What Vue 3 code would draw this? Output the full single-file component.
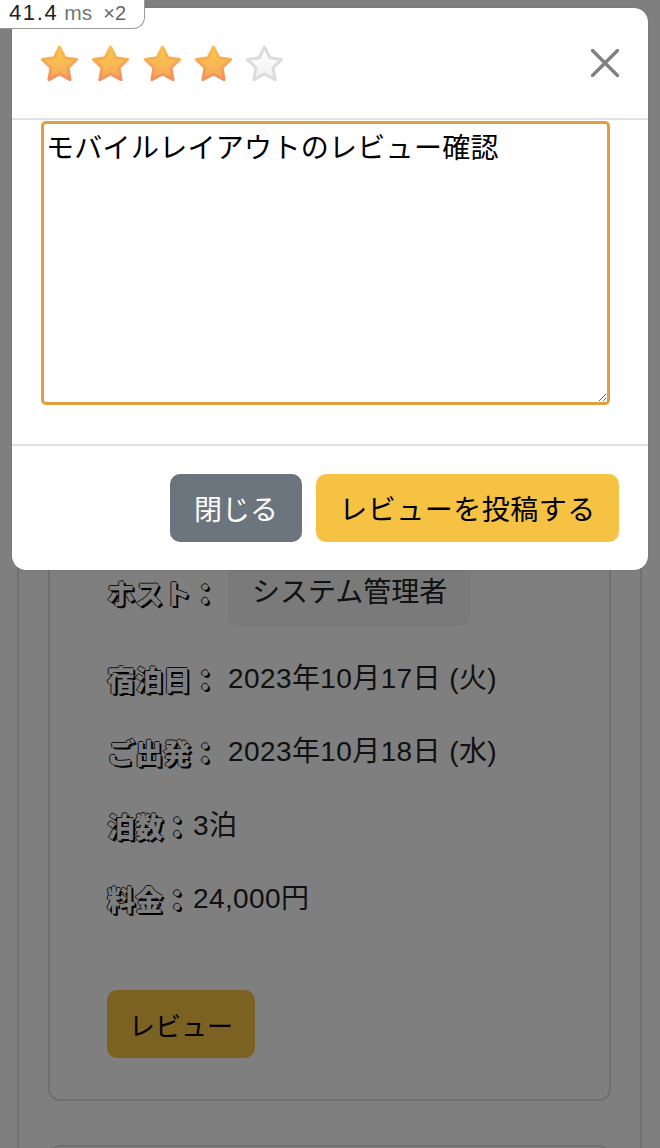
<script setup>
const stars = [true, true, true, true, false]
const reviewText = 'モバイルレイアウトのレビュー確認'
const details = [
  { label: 'ホスト：', value: 'システム管理者', wide: true, pill: true },
  { label: '宿泊日：', value: '2023年10月17日 (火)', wide: true },
  { label: 'ご出発：', value: '2023年10月18日 (水)', wide: true },
  { label: '泊数：', value: '3泊' },
  { label: '料金：', value: '24,000円' }
]
</script>

<template>
  <div class="page">
    <div class="outer">
      <section class="card">
        <div v-for="row in details" :key="row.label" class="row">
          <span class="label" :class="{ wide: row.wide }">{{ row.label }}</span>
          <span class="value" :class="{ pill: row.pill }">{{ row.value }}</span>
        </div>
        <button class="review" type="button">レビュー</button>
      </section>
      <section class="card next"></section>
    </div>

    <div class="backdrop"></div>

    <div class="modal">
      <header class="modal-head">
        <div class="stars">
          <svg v-for="(on, i) in stars" :key="i" class="star" viewBox="0 0 41 40">
            <defs>
              <linearGradient id="gold" x1="0" y1="0" x2="0" y2="1">
                <stop offset="0" stop-color="#fbcd48" />
                <stop offset="1" stop-color="#f6a65c" />
              </linearGradient>
              <linearGradient id="goldedge" x1="0" y1="0" x2="0" y2="1">
                <stop offset="0" stop-color="#f9bd4c" />
                <stop offset="1" stop-color="#f3905e" />
              </linearGradient>
              <linearGradient id="blank" x1="0" y1="0" x2="0" y2="1">
                <stop offset="0" stop-color="#ffffff" />
                <stop offset="1" stop-color="#f1f1f1" />
              </linearGradient>
            </defs>
            <path
              d="M20.5 3 L25.79 13.72 L37.62 15.44 L29.06 23.78 L31.08 35.56 L20.5 30 L9.92 35.56 L11.94 23.78 L3.38 15.44 L15.21 13.72 Z"
              :fill="on ? 'url(#gold)' : 'url(#blank)'"
              :stroke="on ? 'url(#goldedge)' : '#dcdcdc'"
              stroke-width="3"
              stroke-linejoin="round"
            />
          </svg>
        </div>
        <button class="close" type="button" aria-label="閉じる">
          <svg viewBox="0 0 28 28" width="28" height="28">
            <path d="M1.5 1.5 L26.5 26.5 M26.5 1.5 L1.5 26.5" stroke="#808080" stroke-width="3.4" stroke-linecap="round" fill="none" />
          </svg>
        </button>
      </header>
      <div class="modal-body">
        <textarea class="text" :value="reviewText"></textarea>
      </div>
      <footer class="modal-foot">
        <button class="btn secondary" type="button">閉じる</button>
        <button class="btn primary" type="button">レビューを投稿する</button>
      </footer>
    </div>

    <div class="perf">
      <span class="ms">41.4</span><span class="unit">ms</span><span class="scale">×2</span>
    </div>
  </div>
</template>

<style>
html, body { margin: 0; padding: 0; background: #fff; }
</style>

<style scoped>
.page {
  position: relative;
  height: 1148px;
  overflow: hidden;
  padding-top: 410px;
  box-sizing: border-box;
  font-family: "Liberation Sans", "Noto Sans CJK JP", sans-serif;
  font-size: 28px;
  color: #222;
}
.outer {
  margin: 0 18px 0 17px;
  padding: 0 29px;
  border-left: 2px solid #e4e4e4;
  border-right: 2px solid #e4e4e4;
  display: flex;
  flex-direction: column;
  gap: 44px;
}
.card {
  height: 691px;
  box-sizing: border-box;
  border: 2px solid #dedede;
  border-radius: 12px;
  padding: 164px 57px 0;
  display: flex;
  flex-direction: column;
  align-items: flex-start;
}
.card.next { height: 200px; }
.row {
  display: flex;
  align-items: flex-start;
  height: 73.3px;
  line-height: 34px;
}
.row:first-child { height: 86px; }
.label {
  font-weight: 900;
  font-size: 28px;
  color: #fff;
  text-shadow: 1px 1px 0 #000, 2px 2px 0 #000, -1px 0 0 #222, 0 -1px 0 #222;
  font-family: "Noto Sans CJK JP", sans-serif;
  white-space: nowrap;
}
.label.wide { width: 121px; }
.label:not(.wide) { width: 86px; }
.value { display: block; color: #222; white-space: nowrap; letter-spacing: 0.4px; }
.pill {
  margin-top: -16px;
  padding: 16px 24px;
  background: #f5f5f5;
  border-radius: 10px;
  letter-spacing: 0;
}
.review {
  margin-top: 35px;
  height: 68px;
  width: 148px;
  padding: 0;
  border: 0;
  border-radius: 10px;
  background: #f6c244;
  color: #000;
  font: inherit;
  font-size: 26px;
}
.backdrop {
  position: absolute;
  inset: 0;
  background: rgba(0, 0, 0, 0.5);
}
.modal {
  position: absolute;
  left: 12px;
  top: 8px;
  width: 636px;
  height: 562px;
  background: #fff;
  border-radius: 14px;
  display: flex;
  flex-direction: column;
  box-shadow: 0 0 1px rgba(0, 0, 0, 0.5);
}
.modal-head {
  height: 112px;
  box-sizing: border-box;
  border-bottom: 2px solid #dee2e6;
  padding: 0 29px 0 27px;
  display: flex;
  align-items: center;
  justify-content: space-between;
}
.stars { display: flex; gap: 10.3px; margin-top: 2px; }
.star { width: 41px; height: 40px; display: block; filter: blur(0.5px); }
.close {
  width: 28px;
  height: 28px;
  padding: 0;
  border: 0;
  background: none;
}
.close svg { display: block; }
.modal-body {
  height: 324px;
  box-sizing: border-box;
  padding: 1px 38px 0 29px;
}
.text {
  display: block;
  width: 569px;
  height: 284px;
  box-sizing: border-box;
  border: 3px solid #e09f3e;
  border-radius: 5px;
  outline: none;
  padding: 2px;
  margin: 0;
  font-family: "Liberation Sans", "Noto Sans CJK JP", sans-serif;
  font-size: 28px;
  letter-spacing: 0.3px;
  color: #000;
}
.modal-foot {
  flex: 1;
  border-top: 2px solid #dee2e6;
  padding: 28px 29px 0;
  display: flex;
  justify-content: flex-end;
  align-items: flex-start;
  gap: 14px;
}
.btn {
  height: 68px;
  padding: 0;
  border: 0;
  border-radius: 10px;
  font-family: inherit;
  font-size: 28px;
  letter-spacing: 0.5px;
  white-space: nowrap;
}
.secondary { background: #6c757d; color: #fff; width: 132px; letter-spacing: 0; }
.primary { background: #f6c244; color: #000; width: 303px; }
.perf {
  position: absolute;
  left: 0;
  top: 0;
  width: 145px;
  height: 29px;
  box-sizing: border-box;
  padding-left: 9px;
  background: #fff;
  border-style: solid;
  border-color: #9a9a9a;
  border-width: 0 1px 1px 0;
  border-bottom-right-radius: 12px;
  font-size: 22px;
  line-height: 25px;
  white-space: nowrap;
  display: flex;
  align-items: baseline;
}
.ms { color: #222; letter-spacing: 1.6px; }
.unit { color: #777; margin-left: 6px; font-size: 21px; }
.scale { color: #666; font-size: 20px; margin-left: 11px; }
</style>
